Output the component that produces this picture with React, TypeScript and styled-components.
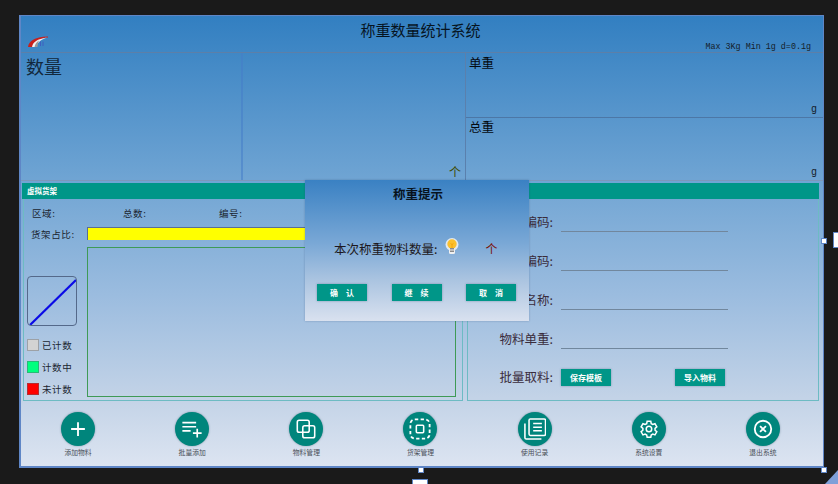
import { FC, ReactNode } from 'react';
import styled, { createGlobalStyle } from 'styled-components';

const CJK = `"Noto Sans CJK SC", "Liberation Sans", sans-serif`;

const GlobalStyle = createGlobalStyle`
  html, body {
    margin: 0;
    padding: 0;
    background: #1a1a1a;
    overflow: hidden;
  }
  * {
    box-sizing: border-box;
  }
`;

const tools: { label: string; icon: ReactNode }[] = [
  {
    label: '添加物料',
    icon: <path d="M12 4.500v15M4.500 12h15" strokeWidth={2} />,
  },
  {
    label: '批量添加',
    icon: <path d="M1.500 5h15M1.500 9.500h15M1.500 14h9M13 16.500h9.500M17.700 11.700v9.600" strokeWidth={1.8} />,
  },
  {
    label: '物料管理',
    icon: (
      <>
        <rect x="2.500" y="2.500" width="13" height="13" rx="2" />
        <rect x="8.500" y="8.500" width="13" height="13" rx="2" />
      </>
    ),
  },
  {
    label: '货架管理',
    icon: (
      <>
        <rect x="1.500" y="1.500" width="21" height="21" rx="5" strokeDasharray="3.600 2.600" strokeWidth={2} />
        <rect x="8" y="8" width="8" height="8" rx="1" strokeWidth={1.7} />
      </>
    ),
  },
  {
    label: '使用记录',
    icon: (
      <>
        <path d="M1 6v15.500a1.500 1.500 0 0 0 1.500 1.500H19" />
        <rect x="5.500" y="1" width="18" height="18" rx="1.500" />
        <path d="M10 6h9.500M10 10h9.500M10 14h9.500" />
      </>
    ),
  },
  {
    label: '系统设置',
    icon: (
      <g transform="translate(2 2) scale(0.83)">
        <path d="M9.600 2h4.800l.6 3 2 1.100 2.900-1 2.400 4.100-2.300 2v2.500l2.300 2-2.400 4.100-2.900-1-2 1.100-.6 3H9.600l-.6-3-2-1.100-2.900 1-2.400-4.100 2.300-2v-2.500l-2.300-2 2.400-4.100 2.900 1 2-1.100z" strokeWidth={2} />
        <circle cx="12" cy="12" r="3.600" strokeWidth={2} />
      </g>
    ),
  },
  {
    label: '退出系统',
    icon: (
      <>
        <circle cx="12" cy="12" r="9" strokeWidth={2} />
        <path d="M8.800 8.800l6.400 6.400M15.200 8.800l-6.400 6.400" strokeWidth={2} />
      </>
    ),
  },
];

const fields = ['物料编码', '货架编码', '物料名称', '物料单重'];

const legend = [
  { label: '已计数', color: '#d3d3d3' },
  { label: '计数中', color: '#00ff7f' },
  { label: '未计数', color: '#ff0000' },
];

const Logo: FC = () => (
  <svg width="22" height="13" viewBox="0 0 22 13">
    <path d="M1 12C2 6 7 2 21 1.500L21 2.500C12 3 9 7 8 12z" fill="#c8201c" />
    <path d="M5 12C6 7 10 4 20 2.500C13 5 10 8 9.500 12z" fill="#f2f2f2" />
    <path d="M7.500 12C8 9 9.500 7 12 5.500C11 8 10.500 10 10.500 12z" fill="#9a9a9a" />
    <path d="M13.500 6.500V11M16 6.500V11" stroke="#3f5fc0" strokeWidth="1" fill="none" />
  </svg>
);

const Bulb: FC = () => (
  <svg width="14" height="17" viewBox="0 0 14 17">
    <circle cx="7" cy="6.500" r="6.500" fill="#f4f4f4" opacity="0.85" />
    <rect x="4" y="11" width="6" height="5" rx="1.500" fill="#f0f0f0" />
    <circle cx="7" cy="6" r="4.700" fill="#fbc02d" />
    <rect x="5" y="10" width="4" height="1.500" fill="#8a8a8a" />
    <rect x="5" y="12.500" width="4" height="1.500" fill="#8a8a8a" />
    <path d="M7 10V6.500M5.500 5.500L7 6.500L8.500 5.500" stroke="#f59f00" strokeWidth="0.8" fill="none" />
  </svg>
);

const App: FC = () => (
  <Page>
    <GlobalStyle />
    <Window>
      <Header>
        <LogoSlot>
          <Logo />
        </LogoSlot>
        <Title>称重数量统计系统</Title>
        <Spec>Max 3Kg Min 1g d=0.1g</Spec>
      </Header>

      <Readouts>
        <CountLabelPanel>
          <CountLabel>数量</CountLabel>
        </CountLabelPanel>
        <CountValuePanel>
          <CountUnit>个</CountUnit>
        </CountValuePanel>
        <WeightColumn>
          <WeightPanel>
            <WeightLabel>单重</WeightLabel>
            <WeightUnit>g</WeightUnit>
          </WeightPanel>
          <WeightPanel>
            <WeightLabel>总重</WeightLabel>
            <WeightUnit>g</WeightUnit>
          </WeightPanel>
        </WeightColumn>
      </Readouts>

      <SectionBar>虚拟货架</SectionBar>

      <Workspace>
        <ShelfPanel>
          <InfoRow>
            <SmallLabel>区域:</SmallLabel>
            <SmallLabel>总数:</SmallLabel>
            <SmallLabel>编号:</SmallLabel>
          </InfoRow>
          <RatioRow>
            <SmallLabel>货架占比:</SmallLabel>
            <RatioBar />
          </RatioRow>
          <ShelfBody>
            <ShelfSide>
              <Thumb>
                <svg width="48" height="48" viewBox="0 0 48 48">
                  <line x1="2" y1="48" x2="48" y2="3" stroke="#0a0ae6" strokeWidth="2.200" />
                </svg>
              </Thumb>
              <Legend>
                {legend.map((item) => (
                  <LegendItem key={item.label}>
                    <Swatch $color={item.color} />
                    <SmallLabel>{item.label}</SmallLabel>
                  </LegendItem>
                ))}
              </Legend>
            </ShelfSide>
            <ShelfCanvas />
          </ShelfBody>
        </ShelfPanel>

        <FormPanel>
          {fields.map((name) => (
            <FormRow key={name}>
              <FormLabel>{name}:</FormLabel>
              <FormLine />
            </FormRow>
          ))}
          <BatchRow>
            <FormLabel>批量取料:</FormLabel>
            <BatchButtons>
              <TealButton>保存模板</TealButton>
              <TealButton>导入物料</TealButton>
            </BatchButtons>
          </BatchRow>
        </FormPanel>
      </Workspace>

      <Toolbar>
        {tools.map((tool) => (
          <Tool key={tool.label}>
            <ToolIcon>
              <svg viewBox="0 0 24 24" fill="none" stroke="#fff" strokeWidth="1.700">
                {tool.icon}
              </svg>
            </ToolIcon>
            <ToolLabel>{tool.label}</ToolLabel>
          </Tool>
        ))}
      </Toolbar>

      <Dialog>
        <DialogTitle>称重提示</DialogTitle>
        <DialogRow>
          <DialogText>本次称重物料数量:</DialogText>
          <BulbSlot>
            <Bulb />
          </BulbSlot>
          <DialogUnit>个</DialogUnit>
        </DialogRow>
        <DialogButtons>
          <TealButton $spaced>确 认</TealButton>
          <TealButton $spaced>继 续</TealButton>
          <TealButton $spaced>取 消</TealButton>
        </DialogButtons>
      </Dialog>
    </Window>

    <Handle $left={821} $top={238} />
    <Handle $left={418} $top={467} />
    <Handle $left={821} $top={467} />
    <SideGrip />
    <BottomGrip />
    <CornerGrip />
  </Page>
);

const Page = styled.div`
  position: relative;
  width: 838px;
  height: 484px;
  padding: 15px 0 0 19px;
  overflow: hidden;
  background: #1a1a1a;
  font-family: ${CJK};
`;

const Window = styled.div`
  position: relative;
  width: 805px;
  height: 453px;
  display: flex;
  flex-direction: column;
  border: 1px solid #5f86c6;
  border-left-width: 2px;
  border-bottom-width: 2px;
  background: linear-gradient(180deg, #327fc1 0%, #6fa4d3 36%, #9bbcdf 62%, #c3d3e7 85%, #dce4f1 100%);
`;

const Header = styled.header`
  height: 37px;
  display: grid;
  grid-template-columns: 1fr auto 1fr;
  padding: 0 12px 0 6px;
  border-bottom: 1px solid #5d7fa8;
`;

const LogoSlot = styled.div`
  padding-top: 13px;
`;

const Title = styled.h1`
  margin: 0;
  padding: 2px 0 0 3px;
  font-size: 15px;
  line-height: 24px;
  font-weight: 400;
  color: #06141f;
`;

const Spec = styled.div`
  justify-self: end;
  align-self: end;
  font-family: 'Liberation Mono', monospace;
  font-size: 8.400px;
  line-height: 12px;
  color: #14202a;
`;

const Readouts = styled.div`
  height: 128px;
  display: flex;
  border-bottom: 1px solid #7d98ba;
`;

const CountLabelPanel = styled.div`
  width: 220px;
  padding: 0 0 0 5px;
`;

const CountLabel = styled.span`
  font-size: 18px;
  line-height: 26px;
  color: #12283c;
`;

const CountValuePanel = styled.div`
  width: 224px;
  display: flex;
  align-items: flex-end;
  justify-content: flex-end;
  padding: 0 4px 0 0;
  border-left: 2px solid rgba(70, 125, 200, 0.55);
`;

const CountUnit = styled.span`
  font-size: 12px;
  line-height: 16px;
  color: #3f4a00;
`;

const WeightColumn = styled.div`
  flex: 1;
  display: flex;
  flex-direction: column;
  border-left: 1px solid #5a80ad;
`;

const WeightPanel = styled.div`
  height: 64px;
  display: flex;
  justify-content: space-between;
  padding: 0 6px 0 3px;

  & + & {
    border-top: 1px solid #4c77a6;
  }

  & + & > :first-child {
    margin-top: -1px;
  }
`;

const WeightLabel = styled.span`
  font-size: 12.500px;
  line-height: 20px;
  color: #050a10;
`;

const WeightUnit = styled.span`
  align-self: flex-end;
  font-family: 'Liberation Mono', monospace;
  font-size: 10px;
  line-height: 14px;
  color: #14202a;
`;

const SectionBar = styled.div`
  height: 16px;
  margin: 2px 4px 0 1px;
  padding-left: 5px;
  background: #009688;
  color: #fff;
  font-size: 7.500px;
  font-weight: 700;
  line-height: 16px;
`;

const Workspace = styled.div`
  height: 202px;
  display: flex;
  gap: 4px;
  padding: 0 4px 0 2px;
`;

const panelEdge = `
  border: 1px solid #6dbbc3;
  border-top: none;
`;

const ShelfPanel = styled.section`
  ${panelEdge}
  width: 440px;
  padding: 8px 6px 3px 3px;
  display: flex;
  flex-direction: column;
`;

const InfoRow = styled.div`
  display: grid;
  grid-template-columns: 91px 96px 1fr;
  padding-left: 5px;
  height: 12px;
  align-items: center;
`;

const SmallLabel = styled.span`
  font-size: 9.500px;
  line-height: 12px;
  letter-spacing: 0.6px;
  color: #1a2530;
  white-space: nowrap;
`;

const RatioRow = styled.div`
  display: grid;
  grid-template-columns: 56px 1fr;
  align-items: center;
  padding-left: 4px;
  margin-top: 8px;
`;

const RatioBar = styled.div`
  height: 13px;
  background: #ffff00;
  border-top: 1px solid #5a6e96;
  border-left: 1px solid #5a6e96;
`;

const ShelfBody = styled.div`
  flex: 1;
  display: flex;
  margin-top: 7px;
`;

const ShelfSide = styled.div`
  width: 60px;
  padding-top: 29px;
`;

const Thumb = styled.div`
  width: 50px;
  height: 50px;
  border: 1px solid #54698a;
  border-radius: 4px;
  overflow: hidden;
`;

const Legend = styled.div`
  margin-top: 12px;
  display: flex;
  flex-direction: column;
  gap: 9px;
`;

const LegendItem = styled.div`
  display: flex;
  align-items: center;
  gap: 3px;
  height: 13px;
`;

const Swatch = styled.span<{ $color: string }>`
  width: 12px;
  height: 12px;
  background: ${(p) => p.$color};
  border: 1px solid rgba(90, 100, 110, 0.45);
`;

const ShelfCanvas = styled.div`
  flex: 1;
  border: 1px solid #3f9a56;
`;

const FormPanel = styled.section`
  ${panelEdge}
  flex: 1;
  padding: 10px 0 0 0;
  display: flex;
  flex-direction: column;
  gap: 16px;
`;

const FormRow = styled.div`
  display: flex;
  align-items: flex-end;
  gap: 8px;
  height: 23px;

  span {
    margin-bottom: 1px;
  }
`;

const FormLabel = styled.span`
  width: 85px;
  text-align: right;
  font-size: 12.500px;
  line-height: 18px;
  color: #3a2c3c;
  white-space: nowrap;
`;

const FormLine = styled.div`
  width: 167px;
  height: 1px;
  background: #71879d;
`;

const BatchRow = styled.div`
  display: flex;
  align-items: center;
  gap: 8px;
  margin-top: 3px;
`;

const BatchButtons = styled.div`
  width: 164px;
  display: flex;
  justify-content: space-between;
`;

const TealButton = styled.button<{ $spaced?: boolean }>`
  width: 50px;
  height: 17px;
  padding: 0;
  border: none;
  background: #009688;
  box-shadow: 0 0 2px rgba(60, 80, 110, 0.45);
  color: #fff;
  font-family: ${CJK};
  font-size: 8px;
  font-weight: 700;
  line-height: 17px;
  word-spacing: ${(p) => (p.$spaced ? '6px' : '0')};
`;

const Toolbar = styled.nav`
  flex: 1;
  display: grid;
  grid-template-columns: repeat(7, 1fr);
  padding: 11px 3px 0 0;
`;

const Tool = styled.div`
  display: flex;
  flex-direction: column;
  align-items: center;
`;

const ToolIcon = styled.div`
  width: 34px;
  height: 34px;
  border-radius: 50%;
  background: #00857c;
  box-shadow: 0 0 2px rgba(40, 70, 90, 0.5);
  display: flex;
  align-items: center;
  justify-content: center;

  svg {
    width: 22px;
    height: 22px;
  }
`;

const ToolLabel = styled.span`
  margin-top: 0;
  font-size: 6.800px;
  line-height: 12px;
  color: #4a4f58;
`;

const Dialog = styled.div`
  position: absolute;
  left: 284px;
  top: 164px;
  width: 224px;
  height: 141px;
  display: flex;
  flex-direction: column;
  align-items: center;
  background: linear-gradient(180deg, #3a81c3 0%, #7aa8d6 45%, #a9c3e0 70%, #d9e1ef 100%);
  box-shadow: 0 0 2px rgba(40, 70, 110, 0.35);
`;

const DialogTitle = styled.h2`
  margin: 4px 0 0;
  padding-left: 2px;
  font-size: 12.500px;
  line-height: 20px;
  font-weight: 700;
  color: #07121c;
`;

const DialogRow = styled.div`
  width: 100%;
  margin-top: 35px;
  padding-left: 29px;
  display: flex;
  align-items: center;
  height: 20px;
`;

const DialogText = styled.span`
  font-size: 12.500px;
  line-height: 18px;
  color: #1d1820;
  white-space: nowrap;
`;

const BulbSlot = styled.span`
  display: flex;
  margin: -5px 0 0 8px;
`;

const DialogUnit = styled.span`
  margin-left: 26px;
  font-size: 12px;
  line-height: 18px;
  color: #7a1206;
`;

const DialogButtons = styled.div`
  width: 100%;
  margin-top: 25px;
  padding: 0 13px 0 12px;
  display: flex;
  justify-content: space-between;
`;

const Handle = styled.span<{ $left: number; $top: number }>`
  position: absolute;
  left: ${(p) => p.$left}px;
  top: ${(p) => p.$top}px;
  width: 6px;
  height: 6px;
  background: #fff;
  border: 1px solid #5f86c6;
`;

const SideGrip = styled.span`
  position: absolute;
  left: 833px;
  top: 232px;
  width: 8px;
  height: 16px;
  background: #fff;
  border: 1px solid #5f86c6;
`;

const BottomGrip = styled.span`
  position: absolute;
  left: 412px;
  top: 479px;
  width: 16px;
  height: 8px;
  background: #fff;
  border: 1px solid #5f86c6;
`;

const CornerGrip = styled.span`
  position: absolute;
  right: 0;
  bottom: 0;
  width: 0;
  height: 0;
  border-style: solid;
  border-width: 0 0 14px 13px;
  border-color: transparent transparent #7f9fd8 transparent;
`;

export default App;
